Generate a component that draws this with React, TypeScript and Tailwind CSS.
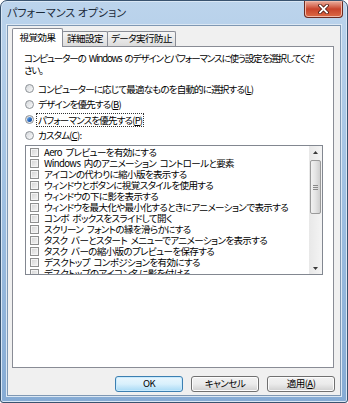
import React from 'react'

const jp = "font-['Noto_Sans_CJK_JP','Noto_Sans',sans-serif] [font-feature-settings:'palt']"

const effects = [
  'Aero プレビューを有効にする',
  'Windows 内のアニメーション コントロールと要素',
  'アイコンの代わりに縮小版を表示する',
  'ウィンドウとボタンに視覚スタイルを使用する',
  'ウィンドウの下に影を表示する',
  'ウィンドウを最大化や最小化するときにアニメーションで表示する',
  'コンボ ボックスをスライドして開く',
  'スクリーン フォントの縁を滑らかにする',
  'タスク バーとスタート メニューでアニメーションを表示する',
  'タスク バーの縮小版のプレビューを保存する',
  'デスクトップ コンポジションを有効にする',
  'デスクトップのアイコン名に影を付ける',
]

function Radio({ checked, children, focus }: { checked?: boolean; children: React.ReactNode; focus?: boolean }) {
  return (
    <div className="flex items-center h-[15.5px]">
      <span className="w-[9px] h-[9px] rounded-full border border-[#8c9196] bg-gradient-to-br from-[#d5d8dc] to-[#fbfbfb] flex items-center justify-center shrink-0">
        {checked && (
          <span className="w-[5px] h-[5px] rounded-full bg-gradient-to-br from-[#8dc2f2] via-[#2e6fc4] to-[#0f3f8a]" />
        )}
      </span>
      <span className={`ml-[3px] px-[1px] leading-[12px] whitespace-nowrap ${focus ? 'outline outline-1 outline-dotted outline-[#333]' : ''}`}>
        {children}
      </span>
    </div>
  )
}

function Btn({ children, primary }: { children: React.ReactNode; primary?: boolean }) {
  return (
    <div
      className={`w-[68px] h-[16px] rounded-[3px] border flex items-center justify-center text-[9.5px] tracking-[-0.5px] leading-none ${
        primary
          ? 'border-[#3c7fb1] bg-gradient-to-b from-[#eaf6fd] via-[#d9f0fc] to-[#a7d9f5] shadow-[inset_0_0_0_1px_#c8eafd]'
          : 'border-[#707070] bg-gradient-to-b from-[#f2f2f2] via-[#ebebeb] to-[#cfcfcf] shadow-[inset_0_0_0_1px_#fcfcfc]'
      }`}
    >
      {children}
    </div>
  )
}

export default function App() {
  return (
    <div className={`w-[348px] h-[403px] bg-white ${jp} text-black`}>
      <div className="w-[348px] h-[403px] rounded-t-[7px] rounded-b-[3px] border border-[#39536f] bg-gradient-to-b from-[#bcd4ec] via-[#9fc0e2] to-[#86abd4] flex flex-col overflow-hidden shadow-[inset_0_0_0_1px_#d9e7f5]">
        {/* title bar */}
        <div className="h-[24px] flex items-start justify-between shrink-0">
          <div className="pl-[6px] pt-[5px] text-[11px] leading-[13px] text-[#1b2a3a]">パフォーマンス オプション</div>
          <div className="mr-[4px] w-[39px] h-[17px] rounded-b-[4px] border border-t-0 border-[#6b2a20] bg-gradient-to-b from-[#eaae9f] via-[#c8432b] to-[#dc6a45] flex items-center justify-center shadow-[inset_0_0_0_1px_#f1b8a8]">
            <svg width="11" height="10" viewBox="0 0 11 10">
              <path d="M2 1.5 L9 8.5 M9 1.5 L2 8.5" stroke="#4a1810" strokeWidth="3.4" strokeLinecap="square" />
              <path d="M2 1.5 L9 8.5 M9 1.5 L2 8.5" stroke="#fff" strokeWidth="1.8" strokeLinecap="square" />
            </svg>
          </div>
        </div>

        {/* client area */}
        <div className="mx-[6px] mb-[6px] flex-1 bg-[#f0f0f0] border border-[#7f98b3] shadow-[0_0_0_1px_#dce8f4] flex flex-col">
          {/* tabs */}
          <div className="h-[20px] pl-[4px] pt-[1px] flex items-end text-[9.5px] tracking-[-0.5px] leading-none whitespace-nowrap shrink-0">
            <div className="relative z-10 h-[19px] w-[51px] bg-white border border-b-0 border-[#898c95] rounded-t-[2px] flex items-center justify-center -mb-px">
              視覚効果
            </div>
            <div className="h-[15px] w-[46px] -ml-px bg-gradient-to-b from-[#f6f6f6] to-[#dcdcdc] border border-b-0 border-[#898c95] rounded-t-[2px] flex items-center justify-center">
              詳細設定
            </div>
            <div className="h-[15px] w-[69px] -ml-px bg-gradient-to-b from-[#f6f6f6] to-[#dcdcdc] border border-b-0 border-[#898c95] rounded-t-[2px] flex items-center justify-center">
              データ実行防止
            </div>
          </div>

          {/* panel */}
          <div className="ml-[4px] mr-[6px] h-[322px] bg-white border border-[#898c95] shrink-0 flex flex-col text-[9.5px] tracking-[-0.8px] [word-spacing:2px]">
            <div className="pl-[11px] pt-[5px] leading-[12px] whitespace-nowrap tracking-[-1.1px]">
              コンピューターの Windows のデザインとパフォーマンスに使う設定を選択してくだ<br />さい。
            </div>
            <div className="pl-[12px] pt-[5px] flex flex-col">
              <Radio>
                コンピューターに応じて最適なものを自動的に選択する(<u>L</u>)
              </Radio>
              <Radio>
                デザインを優先する(<u>B</u>)
              </Radio>
              <Radio checked focus>
                パフォーマンスを優先する(<u>P</u>)
              </Radio>
              <Radio>
                カスタム(<u>C</u>):
              </Radio>
            </div>

            {/* list box */}
            <div className="ml-[12px] mt-[2px] w-[298px] h-[130px] border border-[#828790] flex overflow-hidden">
              <div className="flex-1 pt-[1px] pl-[4px] flex flex-col overflow-hidden tracking-[-0.6px]">
                {effects.map((t) => (
                  <div key={t} className="h-[11px] flex items-center shrink-0">
                    <span className="w-[9px] h-[9px] border border-[#8e8f8f] bg-gradient-to-br from-[#d3d3d3] to-[#f6f6f6] shadow-[inset_0_0_0_1px_#f4f4f4] shrink-0" />
                    <span className="ml-[5px] leading-[11px] whitespace-nowrap">{t}</span>
                  </div>
                ))}
              </div>
              {/* scrollbar */}
              <div className="w-[13px] bg-gradient-to-r from-[#e8e8e8] to-[#f4f4f4] flex flex-col items-center shrink-0">
                <div className="h-[12px] flex items-center justify-center">
                  <svg width="5" height="3" viewBox="0 0 5 3"><path d="M0 3 L2.5 0 L5 3 Z" fill="#3a3a3a" /></svg>
                </div>
                <div className="mt-[2px] w-[11px] h-[54px] rounded-[2px] border border-[#9a9a9a] bg-gradient-to-r from-[#f2f2f2] via-[#e4e4e4] to-[#cfcfcf] flex flex-col items-center justify-center gap-[1px]">
                  <span className="w-[5px] h-px bg-[#8a8a8a]" />
                  <span className="w-[5px] h-px bg-[#8a8a8a]" />
                  <span className="w-[5px] h-px bg-[#8a8a8a]" />
                </div>
                <div className="flex-1" />
                <div className="h-[12px] flex items-center justify-center">
                  <svg width="5" height="3" viewBox="0 0 5 3"><path d="M0 0 L2.5 3 L5 0 Z" fill="#3a3a3a" /></svg>
                </div>
              </div>
            </div>
          </div>

          {/* buttons */}
          <div className="mt-[8px] mr-[5px] flex justify-end gap-[8px]">
            <Btn primary>OK</Btn>
            <Btn>キャンセル</Btn>
            <Btn>
              適用(<u>A</u>)
            </Btn>
          </div>
        </div>
      </div>
    </div>
  )
}
